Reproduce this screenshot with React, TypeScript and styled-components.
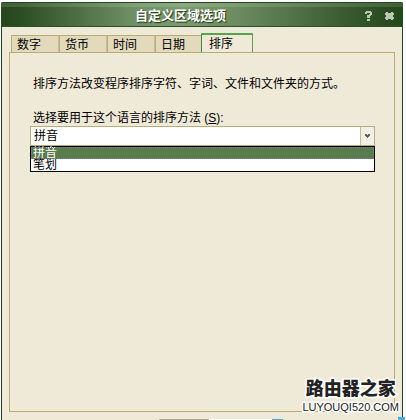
import React, { useState } from "react";
import styled, { createGlobalStyle } from "styled-components";

const GlobalStyle = createGlobalStyle`
  * { box-sizing: border-box; }
  body {
    margin: 0;
    background: #fff;
    color: #000;
    font: 12px/16px "Liberation Sans", "Noto Sans CJK SC", sans-serif;
  }
  button, select { font: inherit; color: inherit; }
`;

const Page = styled.div`
  position: relative;
  display: flex;
  min-height: 100vh;
  padding: 2px 3px 0 1px;
  overflow: hidden;
`;

const Dialog = styled.main`
  flex: 1;
  display: flex;
  flex-direction: column;
  min-width: 0;
  background: #efe9d7;
  border: solid #1d4220;
  border-width: 0 1px;
  border-radius: 2px 2px 0 0;
`;

const TitleBar = styled.header`
  display: grid;
  grid-template-columns: 1fr auto;
  align-items: center;
  height: 25px;
  margin: 0 -1px;
  padding: 2px 7px 0 0;
  border-top: 1px solid #1f4a1c;
  border-bottom: 1px solid #2b4f25;
  border-radius: 2px 2px 0 0;
  background:
    linear-gradient(rgba(255, 255, 255, 0.13) 0 4px, transparent 4px),
    linear-gradient(90deg, #25471a 0%, #2b4e22 5%, #6f9064 33%, #7b9b70 45%, #6c8d60 58%, #34572b 88%, #24461b 100%);
`;

const Title = styled.h1`
  margin: 0;
  padding-left: 134px;
  color: #fff;
  font-size: 13px;
  line-height: 18px;
  font-weight: 700;
  white-space: nowrap;
  text-shadow: 1px 1px 1px #1c3515;
`;

const WindowButtons = styled.div`
  display: flex;
  gap: 8px;
`;

const WindowButton = styled.button`
  display: grid;
  place-items: center;
  width: 13px;
  height: 14px;
  padding: 0;
  border: 0;
  background: none;
  svg { display: block; fill: #b9c8ae; }
`;

const Body = styled.div`
  flex: 1;
  display: flex;
  flex-direction: column;
  padding: 6px 7px 0 7px;
`;

const Tabs = styled.div`
  display: flex;
  align-items: flex-end;
  padding-left: 2px;
  margin-bottom: -1px;
`;

const Tab = styled.button<{ $active: boolean }>`
  width: ${(p) => (p.$active ? 52 : 48)}px;
  height: ${(p) => (p.$active ? 20 : 18)}px;
  margin-left: ${(p) => (p.$active ? -2 : 0)}px;
  padding: 1px 0 0 ${(p) => (p.$active ? 7 : 5)}px;
  text-align: left;
  line-height: 16px;
  border: 1px solid #b8ac74;
  border-left-color: ${(p) => (p.$active ? "#3c8840" : "#b8ac74")};
  border-right-color: ${(p) => (p.$active ? "#6b9858" : "#c9bf90")};
  border-top: ${(p) => (p.$active ? "2px solid #4ea94c" : "1px solid #b8ac74")};
  border-bottom-color: ${(p) => (p.$active ? "#efe9d7" : "#b8ac74")};
  border-radius: 1px 1px 0 0;
  background: ${(p) => (p.$active ? "#efe9d7" : "#e3dabb")};
`;

const Panel = styled.section`
  flex: 1;
  padding: 23px 19px 20px 20px;
  border: 1px solid #b8ac74;
`;

const Description = styled.p`
  margin: 0 0 18px 3px;
  white-space: nowrap;
`;

const Label = styled.label`
  display: block;
  margin-left: 3px;
`;

const Combo = styled.div`
  position: relative;
`;

const Select = styled.select`
  display: block;
  width: 100%;
  height: 20px;
  padding: 0 20px 0 3px;
  appearance: none;
  border: 1px solid #b8ac78;
  border-radius: 0;
  background: #fff;
  outline: 0;
`;

const Arrow = styled.span`
  position: absolute;
  top: 1px;
  right: 1px;
  display: grid;
  place-items: center;
  width: 14px;
  height: 18px;
  border-left: 1px solid #c4bb8e;
  background: #f2f0e6;
  pointer-events: none;
`;

const List = styled.ul`
  position: absolute;
  top: 100%;
  left: 0;
  right: 0;
  margin: 0;
  padding: 0;
  list-style: none;
  border: 1px solid #000;
  background: #fff;
`;

const Option = styled.li<{ $selected: boolean }>`
  height: 12px;
  padding-left: 2px;
  line-height: 12px;
  color: ${(p) => (p.$selected ? "#fff" : "#000")};
  background: ${(p) => (p.$selected ? "#587d4c" : "#fff")};
  outline: ${(p) => (p.$selected ? "1px dotted #8a7a9a" : "none")};
  outline-offset: -1px;
`;

const Footer = styled.footer`
  display: grid;
  grid-template-columns: 157px 50px 63px 11px;
  align-items: end;
  height: 8px;
`;

const Edge = styled.span<{ $color: string }>`
  height: 1px;
  background: ${(p) => p.$color};
`;

const Corner = styled.span`
  position: absolute;
  right: 1px;
  bottom: 0;
  width: 7px;
  height: 3px;
  background: #46ade0;
`;

const Watermark = styled.div`
  position: absolute;
  right: 7px;
  bottom: 6px;
  display: flex;
  flex-direction: column;
  align-items: center;
  color: #222;
  white-space: nowrap;
  -webkit-text-stroke: 3px #fff;
  paint-order: stroke fill;
`;

const SiteName = styled.strong`
  font-size: 18px;
  line-height: 22px;
  font-weight: 900;
`;

const SiteAddress = styled.span`
  font-size: 11px;
  line-height: 14px;
`;

const tabs = ["数字", "货币", "时间", "日期", "排序"];
const methods = ["拼音", "笔划"];

export default function App() {
  const [tab, setTab] = useState("排序");
  const [method, setMethod] = useState("拼音");

  return (
    <Page>
      <GlobalStyle />
      <Dialog>
        <TitleBar>
          <Title>自定义区域选项</Title>
          <WindowButtons>
            <WindowButton type="button" aria-label="?">
              <svg width="7" height="10" viewBox="0 0 7 10">
                <path d="M1 0h5v1h1v3H6v1H5v2H2V4h2V3h1V2H2v1H0V1h1zM2 8h3v2H2z" />
              </svg>
            </WindowButton>
            <WindowButton type="button" aria-label="×">
              <svg width="9" height="8" viewBox="0 0 9 8">
                <path d="M1 0h2v1h3V0h2v1h1v2H8v2h1v2H8v1H6V7H3v1H1V7H0V5h1V3H0V1h1z" />
              </svg>
            </WindowButton>
          </WindowButtons>
        </TitleBar>
        <Body>
          <Tabs role="tablist">
            {tabs.map((name) => (
              <Tab
                key={name}
                type="button"
                role="tab"
                aria-selected={name === tab}
                $active={name === tab}
                onClick={() => setTab(name)}
              >
                {name}
              </Tab>
            ))}
          </Tabs>
          <Panel role="tabpanel">
            <Description>排序方法改变程序排序字符、字词、文件和文件夹的方式。</Description>
            <Label htmlFor="method">
              选择要用于这个语言的排序方法 (<u>S</u>):
            </Label>
            <Combo>
              <Select id="method" value={method} onChange={(e) => setMethod(e.target.value)}>
                {methods.map((name) => (
                  <option key={name}>{name}</option>
                ))}
              </Select>
              <Arrow>
                <svg width="5" height="4" viewBox="0 0 5 4" fill="#5c684f">
                  <path d="M0 0h2v1h1V0h2v2H4v1H3v1H2V3H1V2H0z" />
                </svg>
              </Arrow>
              <List role="listbox">
                {methods.map((name) => (
                  <Option
                    key={name}
                    role="option"
                    aria-selected={name === method}
                    $selected={name === method}
                    onClick={() => setMethod(name)}
                  >
                    {name}
                  </Option>
                ))}
              </List>
            </Combo>
          </Panel>
        </Body>
        <Footer>
          <span />
          <Edge $color="#aaa991" />
          <Edge $color="#ffffff" />
          <Edge $color="#46ade0" />
        </Footer>
      </Dialog>
      <Corner />
      <Watermark>
        <SiteName>路由器之家</SiteName>
        <SiteAddress>LUYOUQI520.COM</SiteAddress>
      </Watermark>
    </Page>
  );
}
